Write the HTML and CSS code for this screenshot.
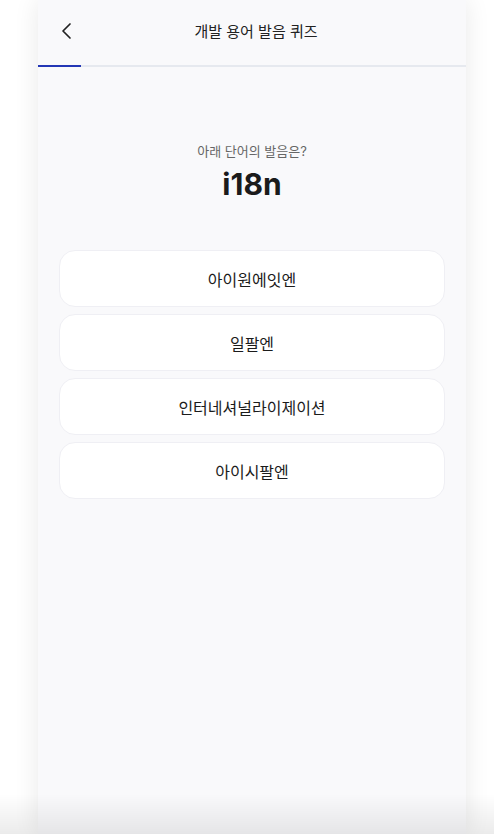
FILE: index.html
```html
<!DOCTYPE html>
<html lang="ko">
<head>
  <meta charset="UTF-8">
  <meta name="viewport" content="width=device-width, initial-scale=1.0">
  <title>개발 용어 발음 퀴즈</title>
  <link rel="stylesheet" href="styles.css">
</head>
<body>
  <div class="app">
    <header class="topbar">
      <button class="back" aria-label="뒤로">
        <svg width="24" height="24" viewBox="0 0 24 24" fill="none" stroke="#222" stroke-width="1.7" stroke-linecap="round" stroke-linejoin="round">
          <path d="M15 5l-7 7 7 7"/>
        </svg>
      </button>
      <h1>개발 용어 발음 퀴즈</h1>
    </header>
    <div class="progress"><div class="progress-fill" style="width: 10%"></div></div>

    <main class="quiz">
      <p class="question">아래 단어의 발음은?</p>
      <h2 class="word">i18n</h2>

      <ul class="options">
        <li><button class="option">아이원에잇엔</button></li>
        <li><button class="option">일팔엔</button></li>
        <li><button class="option">인터네셔널라이제이션</button></li>
        <li><button class="option">아이시팔엔</button></li>
      </ul>
    </main>
  </div>
  <div class="bottom-fade"></div>
</body>
</html>
```

FILE: styles.css
```css
body {
  font-family: Inter, "Noto Sans CJK KR", sans-serif;
  background: #fff;
  margin: 0;
  padding: 0;
  overflow: hidden;
}
.app {
  width: 428px;
  min-height: 834px;
  margin-left: 38px;
  background: #f9f9fb;
  box-shadow: 0 0 24px rgba(0,0,0,0.09);
}
.topbar {
  height: 65px;
  display: flex;
  align-items: center;
  justify-content: center;
  position: relative;
  padding-left: 8px;
}
.topbar h1 {
  margin: 0 0 5px;
  font-size: 15px;
  font-weight: 400;
  color: #222;
}
.back {
  position: absolute;
  left: 17px;
  top: 19px;
  background: none;
  border: 0;
  padding: 0;
  width: 24px;
  height: 24px;
}
.progress {
  height: 2px;
  background: #e6e9ef;
}
.progress-fill {
  height: 100%;
  background: #2337b5;
}
.quiz {
  padding: 0 21px;
}
.question {
  margin: 74px 0 0;
  text-align: center;
  font-size: 13px;
  color: #666;
}
.word {
  margin: 6px 0 0;
  text-align: center;
  font-size: 30px;
  font-weight: 700;
  color: #1b1b1b;
}
.options {
  list-style-type: none;
  padding: 0;
  margin: 48px 0 0;
  display: flex;
  flex-direction: column;
  gap: 7px;
}
.option {
  width: 100%;
  height: 57px;
  background: #fff;
  border: 1px solid #efeff4;
  border-radius: 16px;
  font-family: inherit;
  font-size: 16px;
  font-weight: 400;
  color: #1b1b1b;
}
.bottom-fade {
  position: fixed;
  left: 0;
  right: 0;
  bottom: 0;
  height: 40px;
  background: linear-gradient(rgba(0,0,0,0), rgba(0,0,0,0.08));
  pointer-events: none;
}
```
